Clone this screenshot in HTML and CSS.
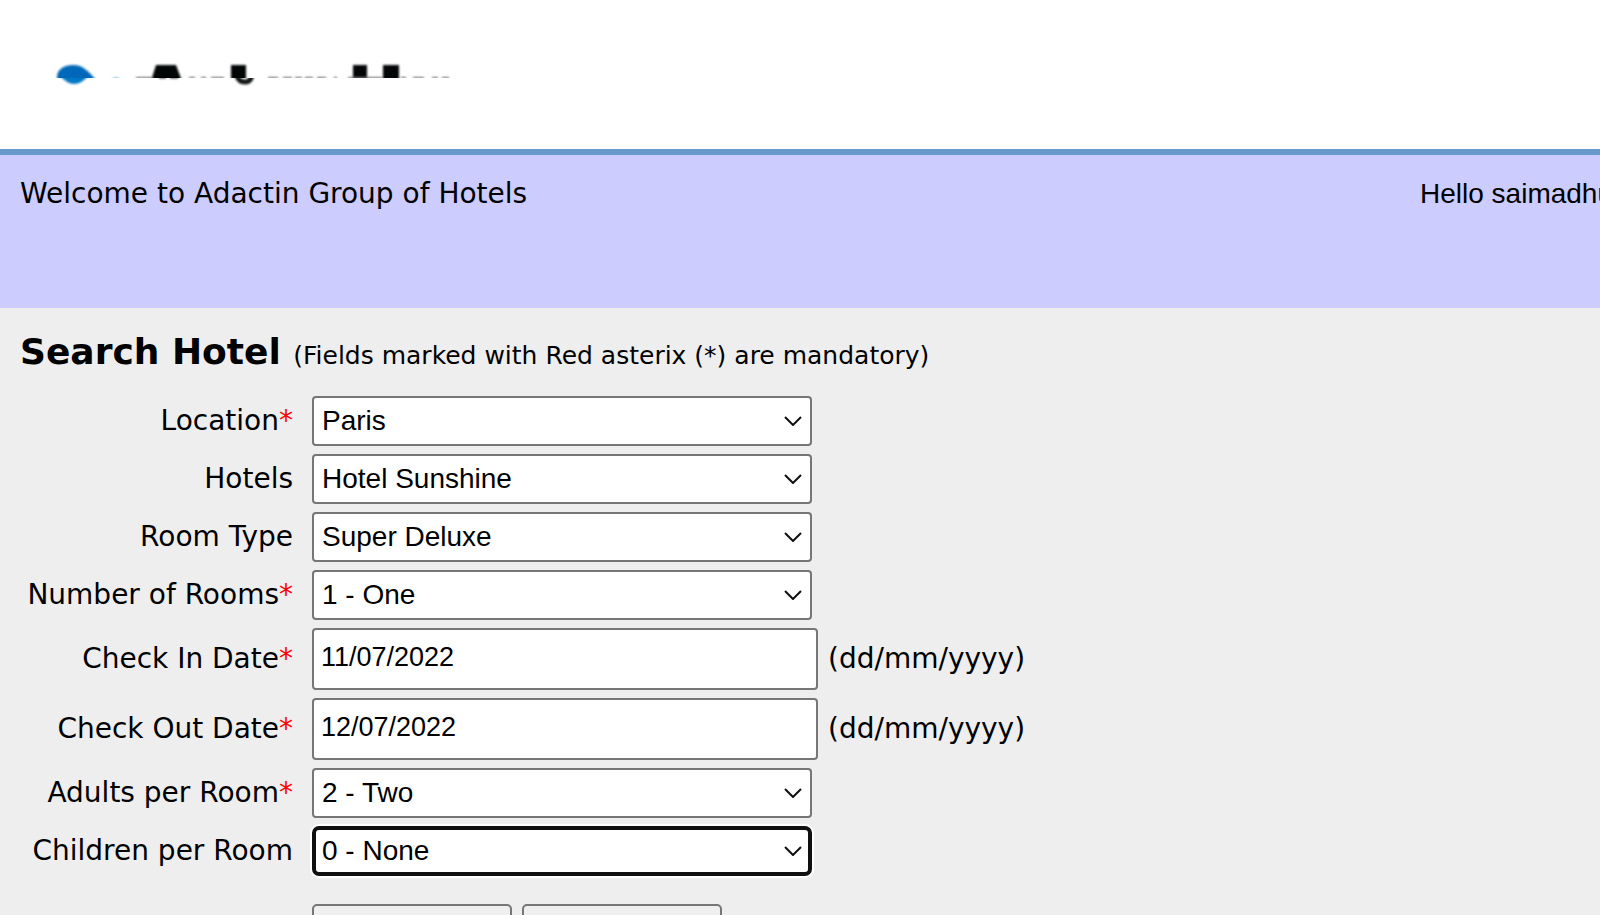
FILE: index.html
```html
<!DOCTYPE html>
<html lang="en">
<head>
<meta charset="utf-8">
<title>Search Hotel</title>
<link rel="stylesheet" href="styles.css">
</head>
<body>
<header class="masthead">
  <svg class="logo" viewBox="0 0 400 30" role="img" aria-label="Adactin">
    <defs>
      <filter id="soft" x="-5%" y="-20%" width="110%" height="140%" color-interpolation-filters="sRGB"><feGaussianBlur stdDeviation="1"/></filter>
      <clipPath id="upper"><rect x="-6" width="406" height="18"/></clipPath>
      <clipPath id="lower"><rect x="-6" y="18" width="406" height="12"/></clipPath>
    </defs>
    <g clip-path="url(#upper)">
      <g filter="url(#soft)">
        <path fill="#0068b8" d="M0 22C-4 11 5 5 15 5C25 5 30 11 38 20V24H0Z"/>
        <path fill="#4a9ad0" d="M52 21Q58 14 64 21Z"/>
        <path fill="#020607" d="M98 5H118L124 21H93Z"/>
        <path fill="#020607" d="M173 5H188V22H173Z M295 5H309V22H295Z M325 5H341V22H325Z"/>
        <path stroke="#777" stroke-width="2" fill="none" d="M78 18H95M131 18H137M143 18H148M153 18H166M210 18H220M225 18H234M237 18H244M247 18H255M259 18H268M276 18H279M290 18H324M343 18H348M355 18H366M374 18H380M384 18H391"/>
      </g>
    </g>
    <g clip-path="url(#lower)">
      <g filter="url(#soft)">
        <path fill="#0078c4" d="M0 14H32Q24 24 16 24Q9 24 0 14Z"/>
        <path fill="none" stroke="#101414" stroke-width="5" d="M179 16Q181 22 187 22Q194 22 194 12"/>
        <path stroke="#444" stroke-width="3" fill="none" d="M101 17H108M112 17H120"/>
      </g>
    </g>
  </svg>
</header>
<div class="welcome">
  <span>Welcome to Adactin Group of Hotels</span>
  <span class="hello">Hello saimadhu</span>
</div>
<main class="content">
  <h1 class="title">Search Hotel <small>(Fields marked with Red asterix (*) are mandatory)</small></h1>
  <form class="search">
    <label for="location">Location<b>*</b></label>
    <div class="pick"><select id="location"><option>Paris</option></select><svg viewBox="0 0 18 10"><path d="M1 1L9 9L17 1"/></svg></div>
    <label for="hotels">Hotels</label>
    <div class="pick"><select id="hotels"><option>Hotel Sunshine</option></select><svg viewBox="0 0 18 10"><path d="M1 1L9 9L17 1"/></svg></div>
    <label for="type">Room Type</label>
    <div class="pick"><select id="type"><option>Super Deluxe</option></select><svg viewBox="0 0 18 10"><path d="M1 1L9 9L17 1"/></svg></div>
    <label for="rooms">Number of Rooms<b>*</b></label>
    <div class="pick"><select id="rooms"><option>1 - One</option></select><svg viewBox="0 0 18 10"><path d="M1 1L9 9L17 1"/></svg></div>
    <label for="checkin">Check In Date<b>*</b></label>
    <div class="date"><input id="checkin" type="text" value="11/07/2022"><span>(dd/mm/yyyy)</span></div>
    <label for="checkout">Check Out Date<b>*</b></label>
    <div class="date"><input id="checkout" type="text" value="12/07/2022"><span>(dd/mm/yyyy)</span></div>
    <label for="adults">Adults per Room<b>*</b></label>
    <div class="pick"><select id="adults"><option>2 - Two</option></select><svg viewBox="0 0 18 10"><path d="M1 1L9 9L17 1"/></svg></div>
    <label for="children">Children per Room</label>
    <div class="pick"><select id="children" class="active"><option>0 - None</option></select><svg viewBox="0 0 18 10"><path d="M1 1L9 9L17 1"/></svg></div>
    <div class="actions"><button type="submit">Search</button><button type="reset">Reset</button></div>
  </form>
</main>
</body>
</html>
```
FILE: styles.css
```css
* { box-sizing: border-box; }
html { scrollbar-width: none; background: #eee; }
body { margin: 0; font: 28px/34px Verdana, "DejaVu Sans", sans-serif; color: #000; }
.masthead { background: #fff; padding: 60px 58px; height: 155px; border-bottom: 6px solid #69c; }
.logo { display: block; width: 400px; height: 30px; overflow: visible; }
.welcome { display: flex; justify-content: space-between; background: #ccf; min-height: 153px; padding: 22px 0 0 20px; overflow: hidden; white-space: nowrap; }
.hello { width: 180px; font-family: Arial, "Liberation Sans", sans-serif; }
.content { padding: 22px 20px 20px; }
.title { margin: 0 0 18px; font-size: 36px; line-height: 44px; font-weight: bold; }
.title small { font-size: 25px; font-weight: normal; }
.search { display: grid; grid-template-columns: 273px 1fr; gap: 8px 19px; align-items: center; }
.search label { text-align: right; white-space: nowrap; }
.search b { color: #f00; font-weight: normal; }
.pick { position: relative; width: 500px; }
.pick select { display: block; width: 100%; height: 50px; padding: 0 32px 2px 8px; appearance: none; border: 2px solid #767676; border-radius: 4px; background: #fff; color: #000; font: 28px Arial, "Liberation Sans", sans-serif; }
.pick select.active { border: 4px solid #101010; border-radius: 7px; padding: 0 30px 2px 6px; box-shadow: 0 0 0 2px #fff; }
.pick svg { position: absolute; right: 10px; top: 20px; width: 18px; height: 10px; fill: none; stroke: #101010; stroke-width: 2; pointer-events: none; }
.date { display: flex; align-items: center; gap: 10px; }
.date input { width: 506px; height: 62px; padding: 0 7px 4px; border: 2px solid #767676; border-radius: 4px; background: #fff; color: #000; font: 27px Arial, "Liberation Sans", sans-serif; }
.actions { grid-column: 2; display: flex; gap: 10px; padding-top: 20px; }
.actions button { width: 200px; height: 60px; border: 2px solid #767676; border-radius: 5px; background: #efefef; font: 28px Arial, "Liberation Sans", sans-serif; }
```
